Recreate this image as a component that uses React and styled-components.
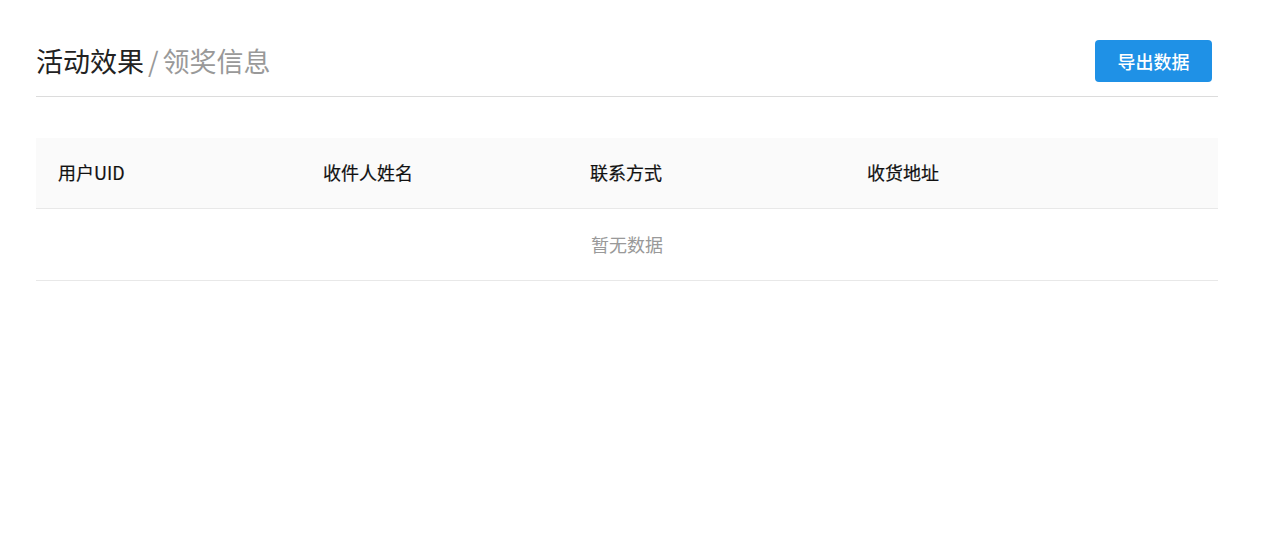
import React from "react";
import styled, { createGlobalStyle } from "styled-components";

const GlobalStyle = createGlobalStyle`
  html, body {
    margin: 0;
    padding: 0;
    background: #fff;
    font-family: "Noto Sans CJK SC", "Noto Sans", "Liberation Sans", sans-serif;
  }
`;

const Page = styled.div`
  padding: 40px 50px 0 36px;
`;

const Header = styled.div`
  display: flex;
  align-items: center;
  justify-content: space-between;
  padding-bottom: 14px;
  border-bottom: 1px solid #dcdcdc;
`;

const Title = styled.h1`
  margin: 0;
  font-size: 27px;
  font-weight: 400;
  line-height: 42px;
  color: #222;
`;

const Crumb = styled.span`
  color: #999;
`;

const Slash = styled.span`
  color: #999;
  margin: 0 4px;
`;

const ExportButton = styled.button`
  width: 117px;
  height: 42px;
  margin-right: 6px;
  border: none;
  border-radius: 4px;
  background: #1f91e6;
  color: #fff;
  font-family: inherit;
  font-size: 18px;
  font-weight: 500;
  cursor: pointer;
`;

const Table = styled.table`
  width: 100%;
  margin-top: 41px;
  border-collapse: collapse;
  table-layout: fixed;
`;

const Th = styled.th`
  box-sizing: border-box;
  width: ${({ $w }) => ($w ? `${$w}px` : "auto")};
  height: 70px;
  padding: 0 0 2px 22px;
  text-align: left;
  background: #fafafa;
  border-bottom: 1px solid #e8e8e8;
  font-size: 18px;
  font-weight: 400;
  color: #111;
  -webkit-text-stroke: 0.2px #111;
`;

const EmptyCell = styled.td`
  box-sizing: border-box;
  height: 72px;
  padding: 0;
  text-align: center;
  border-bottom: 1px solid #e8e8e8;
  font-size: 18px;
  color: #999;
`;

const columns = [
  { title: "用户UID", width: 265 },
  { title: "收件人姓名", width: 267 },
  { title: "联系方式", width: 277 },
  { title: "收货地址" },
];

export default function App() {
  return (
    <>
      <GlobalStyle />
      <Page>
        <Header>
          <Title>
            活动效果<Slash>/</Slash>
            <Crumb>领奖信息</Crumb>
          </Title>
          <ExportButton>导出数据</ExportButton>
        </Header>
        <Table>
          <thead>
            <tr>
              {columns.map((c) => (
                <Th key={c.title} $w={c.width}>
                  {c.title}
                </Th>
              ))}
            </tr>
          </thead>
          <tbody>
            <tr>
              <EmptyCell colSpan={columns.length}>暂无数据</EmptyCell>
            </tr>
          </tbody>
        </Table>
      </Page>
    </>
  );
}
